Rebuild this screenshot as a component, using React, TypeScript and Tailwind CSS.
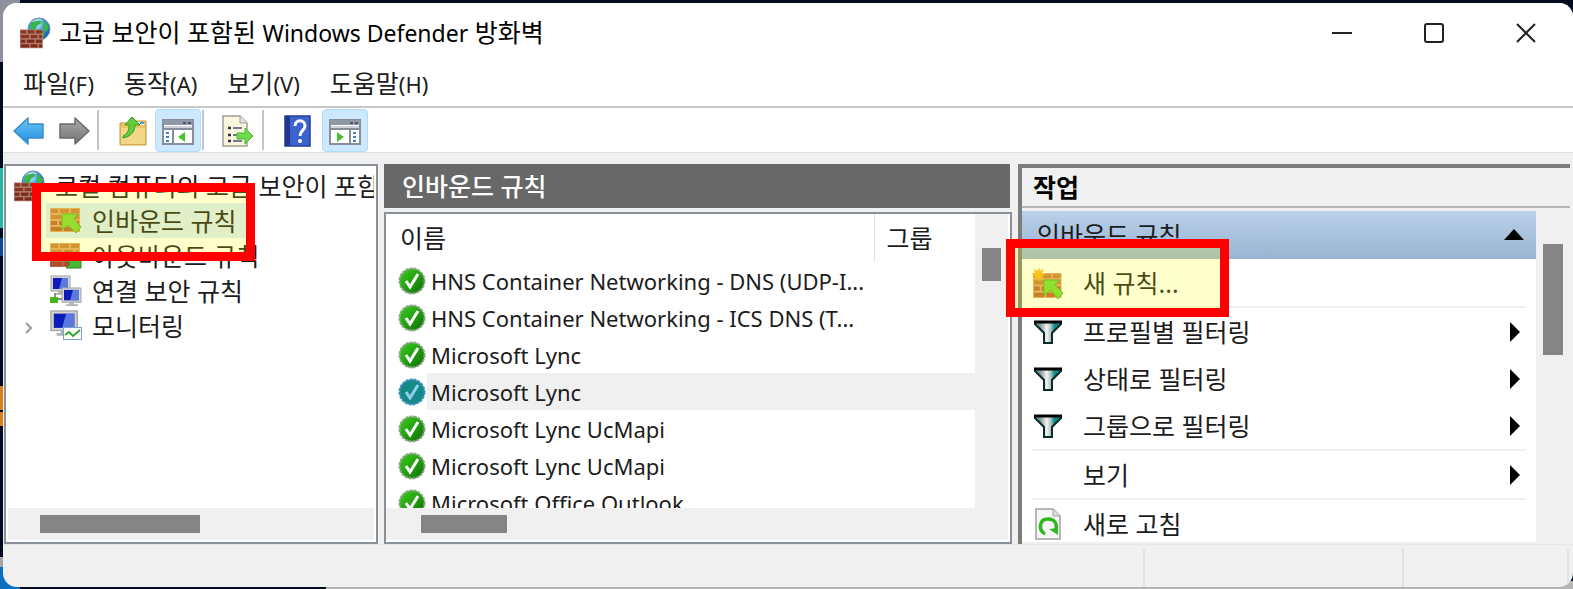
import React from 'react';

const BrickWall = ({ warm }: { warm?: boolean }) => (
  <g>
    <rect width="30" height="24" fill={warm ? '#dba070' : '#b07a6a'} />
    <g fill={warm ? '#cc7a3c' : '#8b3422'}>
      <rect x="1" y="1" width="7" height="4" />
      <rect x="10" y="1" width="9" height="4" />
      <rect x="21" y="1" width="8" height="4" />
      <rect x="1" y="7" width="11" height="4" />
      <rect x="14" y="7" width="9" height="4" />
      <rect x="25" y="7" width="4" height="4" />
    </g>
    <g fill={warm ? '#b8602c' : '#7c2a1b'}>
      <rect x="1" y="13" width="6" height="4" />
      <rect x="9" y="13" width="10" height="4" />
      <rect x="21" y="13" width="8" height="4" />
      <rect x="1" y="19" width="11" height="4" />
      <rect x="14" y="19" width="9" height="4" />
      <rect x="25" y="19" width="4" height="4" />
    </g>
  </g>
);

const FirewallIcon = () => (
  <svg viewBox="0 0 31 32" className="h-8 w-[31px] shrink-0" aria-hidden="true">
    <defs>
      <radialGradient id="globe" cx="0.4" cy="0.3" r="0.8">
        <stop offset="0" stopColor="#c8f0ff" />
        <stop offset="0.4" stopColor="#3fa0e8" />
        <stop offset="1" stopColor="#123c9c" />
      </radialGradient>
    </defs>
    <circle cx="19" cy="12" r="11" fill="url(#globe)" stroke="#6f93b8" />
    <path d="M10 8c3-5 7-6 10-5l1 3-4 3-2 4-4 1zM23 4c3 1 5 4 6 7l-3 4-4-3 1-3zM20 15l5 1-2 5-4-1z" fill="#39b54a" />
    <path d="M12 5c3-3 8-4 12-1-4-1-8 0-12 1z" fill="#fff" opacity="0.7" />
    <g transform="translate(0 12.5) scale(0.76 0.78)">
      <BrickWall />
    </g>
  </svg>
);

const InboundIcon = () => (
  <svg viewBox="0 0 32 26" className="h-[26px] w-8 shrink-0" aria-hidden="true">
    <BrickWall warm />
    <path d="M12 6h16l-4 5 7 8-5 6-8-8-6 5z" fill="#7ed53c" stroke="#57b025" strokeLinejoin="round" />
  </svg>
);

const OutboundIcon = () => (
  <svg viewBox="0 0 32 26" className="h-[26px] w-8 shrink-0" aria-hidden="true">
    <BrickWall warm />
    <rect y="12" width="30" height="12" fill="#a8402c" opacity="0.6" />
    <path d="M31 25H16l4-4-7-8 4-5 9 9 5-4z" fill="#49b836" stroke="#2f8a22" strokeLinejoin="round" />
  </svg>
);

const NewRuleIcon = () => (
  <svg viewBox="0 0 32 32" className="size-8 shrink-0" aria-hidden="true">
    <g transform="translate(1 6) scale(0.95 1.04)">
      <BrickWall warm />
    </g>
    <path d="M12 13h15l-4 5 8 8-5 6-7-9-7 5z" fill="#74d83a" stroke="#57b025" strokeLinejoin="round" />
    <path d="M7 0l1 4 4-2-2 4 4 1-4 2 2 4-4-2-1 4-1-4-4 2 1-4-4-2 4-1-1-4 4 2z" fill="#f8b421" />
  </svg>
);

const Monitor = () => (
  <g>
    <rect width="19" height="15" fill="#d6d6d0" stroke="#a2a2a0" />
    <rect x="2" y="2" width="15" height="11" fill="#0b1cb8" />
    <path d="M11 2h6v11H8z" fill="#7da0f2" opacity="0.7" />
    <path d="M7 15h5v2h4v2H4v-2h3z" fill="#b4b4b4" />
  </g>
);

const ConnectionIcon = () => (
  <svg viewBox="0 0 32 32" className="size-8 shrink-0" aria-hidden="true">
    <g transform="translate(1 1)">
      <Monitor />
    </g>
    <g transform="translate(12 13) scale(1 0.95)">
      <Monitor />
    </g>
    <path d="M5 18v6h7" fill="none" stroke="#8c8c8c" strokeWidth="2" />
    <rect y="22" width="8" height="6" fill="#43b71c" />
  </svg>
);

const MonitoringIcon = () => (
  <svg viewBox="0 0 32 32" className="size-8 shrink-0" aria-hidden="true">
    <g transform="translate(1 1) scale(1.38 1.3)">
      <Monitor />
    </g>
    <rect x="13.5" y="17.5" width="18" height="12" fill="#fff" stroke="#7aa0cf" />
    <path d="M15 25l4-3 4 4 7-6" fill="none" stroke="#35a52c" strokeWidth="2" />
  </svg>
);

const Arrow = ({ forward }: { forward?: boolean }) => (
  <svg viewBox="0 0 32 30" className="h-[30px] w-8" aria-hidden="true">
    <defs>
      <linearGradient id="back" x1="0" y1="0" x2="0" y2="1">
        <stop offset="0" stopColor="#6cc7f8" />
        <stop offset="1" stopColor="#1f8be0" />
      </linearGradient>
      <linearGradient id="fwd" x1="0" y1="0" x2="0" y2="1">
        <stop offset="0" stopColor="#a8a8a8" />
        <stop offset="1" stopColor="#747474" />
      </linearGradient>
    </defs>
    <path
      d={forward ? 'M31 15L17 2v6H2v14h15v6z' : 'M1 15L15 2v6h15v14H15v6z'}
      fill={forward ? 'url(#fwd)' : 'url(#back)'}
      stroke={forward ? '#6a6a6a' : '#3c8cc8'}
      strokeWidth="1.5"
      strokeLinejoin="round"
    />
  </svg>
);

const FolderUpIcon = () => (
  <svg viewBox="0 0 28 30" className="h-[30px] w-7" aria-hidden="true">
    <path d="M1 7h10l3-2h13v24H1z" fill="#e8c566" stroke="#c49a3a" />
    <path d="M17 6h8v3h-8z" fill="#fff" />
    <path d="M21 6h4v2h-4z" fill="#4b9be0" />
    <path d="M2 12h24v16H2z" fill="#f3d88a" />
    <path d="M4 20c5-2 6-7 6-11H6l7-8 8 8h-5c0 7-5 12-12 13z" fill="#62cc3b" stroke="#3a9c22" strokeLinejoin="round" />
  </svg>
);

const PaneIcon = ({ right }: { right?: boolean }) => (
  <svg viewBox="0 0 32 26" className="mt-1 h-[26px] w-8" aria-hidden="true">
    <rect x="1" y="1" width="30" height="24" fill="#fff" stroke="#868e9a" strokeWidth="2" />
    <rect x="1" y="1" width="30" height="5" fill="#8f98a6" />
    <path d="M2 8h28" stroke="#cfd4dc" strokeWidth="2" />
    <path d="M2 10h28" stroke="#868e9a" strokeWidth="2" />
    <path d="M21 4h3M26 4h3" stroke="#4e5868" strokeWidth="2" />
    <path d={right ? 'M21 10v15' : 'M11 10v15'} stroke="#868e9a" strokeWidth="2" />
    <path
      d={right ? 'M24 14h4M24 18h4M24 22h4' : 'M4 14h4M4 18h4M4 22h4'}
      stroke="#3d85c8"
      strokeWidth="2"
      strokeDasharray="3 1"
    />
    <path d={right ? 'M8 13v10l7-5z' : 'M23 13v10l-7-5z'} fill="#4cc02c" />
  </svg>
);

const ExportIcon = () => (
  <svg viewBox="0 0 32 32" className="size-8" aria-hidden="true">
    <path d="M1 1h17l7 7v23H1z" fill="#fbf7df" stroke="#a09f95" strokeWidth="1.5" />
    <path d="M18 1v7h7" fill="#e5e5e5" stroke="#a09f95" />
    <path d="M6 13h3M6 20h3M6 26h3" stroke="#333" strokeWidth="2.5" />
    <path d="M11 13h9M11 20h5M11 26h9" stroke="#7d7793" strokeWidth="2" />
    <path d="M15 18h8v-5l8 8-8 8v-5h-8z" fill="#6ddb4c" stroke="#4cb52e" strokeLinejoin="round" />
  </svg>
);

const HelpIcon = () => (
  <svg viewBox="0 0 27 32" className="h-8 w-[27px]" aria-hidden="true">
    <rect x="1" y="1" width="25" height="30" fill="#3c62d0" stroke="#233f98" strokeWidth="1.5" />
    <path d="M1 1h5v30H1z" fill="#20378c" />
    <path d="M11 11c0-7 10-7 10 0 0 4-5 4.5-5 10" fill="none" stroke="#fff" strokeWidth="3" />
    <circle cx="16" cy="26" r="2" fill="#fff" />
  </svg>
);

const CheckIcon = ({ selected }: { selected?: boolean }) => (
  <svg viewBox="0 0 28 28" className="size-7 shrink-0" aria-hidden="true">
    <defs>
      <linearGradient id="ok" x1="0" y1="0" x2="1" y2="1">
        <stop offset="0" stopColor="#3dd020" />
        <stop offset="0.5" stopColor="#22a010" />
        <stop offset="1" stopColor="#0e6a06" />
      </linearGradient>
    </defs>
    <circle
      cx="14"
      cy="14"
      r="12.5"
      fill={selected ? '#158a84' : 'url(#ok)'}
      stroke={selected ? '#3f8fc6' : '#8aa585'}
      strokeWidth="2"
      strokeDasharray="3 1"
    />
    <path d="M8 14l4 6 8-13" fill="none" stroke={selected ? '#8fd0f0' : '#fff'} strokeWidth="3" />
  </svg>
);

const FilterIcon = () => (
  <svg viewBox="0 0 28 24" className="h-6 w-7" aria-hidden="true">
    <defs>
      <linearGradient id="funnel">
        <stop offset="0.2" stopColor="#7f9a9a" />
        <stop offset="0.45" stopColor="#f2f2f2" />
        <stop offset="0.6" stopColor="#b5c4c4" />
        <stop offset="0.75" stopColor="#0e8b8b" />
      </linearGradient>
    </defs>
    <path d="M1 2h26v2l-9 9v10h-8V13L1 4z" fill="url(#funnel)" stroke="#0b2b2b" strokeWidth="2" />
    <path d="M0 2h28" stroke="#000" strokeWidth="3" />
  </svg>
);

const RefreshIcon = () => (
  <svg viewBox="0 0 26 32" className="h-8 w-[26px]" aria-hidden="true">
    <path d="M1 1h17l7 7v23H1z" fill="#f7f7f7" stroke="#a0a0a0" strokeWidth="1.5" />
    <path d="M18 1v7h7" fill="#ddd" stroke="#a0a0a0" />
    <path d="M10 26c-7-4-6-15 3-15 8 0 10 7 7 12" fill="none" stroke="#2fb81c" strokeWidth="3.5" />
    <path d="M14 21l9-1v7z" fill="#2fb81c" />
  </svg>
);

const menus = [
  { name: '파일', hotkey: '(F)' },
  { name: '동작', hotkey: '(A)' },
  { name: '보기', hotkey: '(V)' },
  { name: '도움말', hotkey: '(H)' },
];

const rules = [
  { name: 'HNS Container Networking - DNS (UDP-I...' },
  { name: 'HNS Container Networking - ICS DNS (T...' },
  { name: 'Microsoft Lync' },
  { name: 'Microsoft Lync', selected: true },
  { name: 'Microsoft Lync UcMapi' },
  { name: 'Microsoft Lync UcMapi' },
  { name: 'Microsoft Office Outlook' },
];

const actions = [
  { name: '새 규칙...', icon: <NewRuleIcon />, divider: true },
  { name: '프로필별 필터링', icon: <FilterIcon />, submenu: true },
  { name: '상태로 필터링', icon: <FilterIcon />, submenu: true },
  { name: '그룹으로 필터링', icon: <FilterIcon />, submenu: true, divider: true },
  { name: '보기', icon: null, submenu: true, divider: true },
  { name: '새로 고침', icon: <RefreshIcon /> },
];

const ToolButton = ({ label, active, children }: { label: string; active?: boolean; children: React.ReactNode }) => (
  <button
    aria-label={label}
    className={
      active
        ? 'flex h-[43px] w-[46px] items-center justify-center rounded-sm border border-[#b0dcff] bg-[#cce8ff]'
        : 'flex h-[43px] w-[45px] items-center justify-center pt-0.5'
    }
  >
    {children}
  </button>
);

const Separator = ({ className }: { className: string }) => <div className={`h-10 w-0.5 bg-[#c4c4c4] ${className}`} />;

const Highlight = ({ className }: { className: string }) => (
  <div className={`pointer-events-none absolute z-10 border-[9px] border-[#ff0000] bg-[#ffff00]/20 ${className}`} />
);

const TreeItem = ({ icon, label, expandable }: { icon: React.ReactNode; label: string; expandable?: boolean }) => (
  <li className="flex h-[35px] items-center pl-[15px]">
    <span className="w-[27px]">
      {expandable && (
        <svg viewBox="0 0 12 14" className="mt-1 h-3.5 w-3" aria-hidden="true">
          <path d="M3 2l5 5-5 5" fill="none" stroke="#999" strokeWidth="2" />
        </svg>
      )}
    </span>
    {icon}
    <a href="#" className="ml-[10px]">{label}</a>
  </li>
);

const App: React.FC = () => {
  return (
    <div className="relative flex h-screen flex-col overflow-hidden bg-[#040c22] pt-[3px] pb-0.5 pl-[3px] font-['Noto_Sans','Noto_Sans_CJK_KR',sans-serif] text-[25px] leading-8 text-[#1c1c1c]">
      {/* Desktop showing past the window edge */}
      <div className="absolute inset-y-0 left-0 flex w-5 flex-col">
        <div className="h-[62px] bg-[#8c919c]" />
        <div className="mt-[106px] h-[60px] bg-[#27b5a0]" />
        <div className="mt-[10px] h-[18px] bg-[#0d4a92]" />
        <div className="mt-[130px] h-6 bg-[#d9821b]" />
        <div className="mt-0.5 h-[14px] bg-[#d9821b]" />
        <div className="mt-auto h-8 border-t-[10px] border-[#a5a5a5] bg-[#0c6fc0]" />
      </div>
      <div className="absolute inset-x-0 bottom-0 ml-[326px] h-2 bg-[#b4b4b4]" />

      <div className="relative flex min-h-0 flex-1 flex-col overflow-hidden rounded-[14px] bg-[#f0f0f0]">
        {/* Title bar */}
        <header className="flex h-[60px] shrink-0 items-center bg-white pr-px pl-[17px]">
          <FirewallIcon />
          <h1 className="ml-2 flex-1 pb-0.5 text-black">
            고급 보안이 포함된 <span className="text-[23px]">Windows Defender</span> 방화벽
          </h1>
          <button aria-label="최소화" className="flex w-[92px] justify-center">
            <svg viewBox="0 0 20 20" className="size-5" stroke="#222" strokeWidth="2"><path d="M0 10h20" /></svg>
          </button>
          <button aria-label="최대화" className="flex w-[92px] justify-center">
            <svg viewBox="0 0 20 20" className="size-5" fill="none" stroke="#222" strokeWidth="2">
              <rect x="1" y="1" width="18" height="18" rx="2" />
            </svg>
          </button>
          <button aria-label="닫기" className="flex w-[92px] justify-center">
            <svg viewBox="0 0 20 20" className="size-5" stroke="#222" strokeWidth="2"><path d="M1 1l18 18M19 1L1 19" /></svg>
          </button>
        </header>

        <nav className="flex h-[45px] shrink-0 items-center gap-[30px] border-b-2 border-[#c8c8c8] bg-white pl-5">
          {menus.map((menu) => (
            <button key={menu.name} className="flex items-baseline pb-0.5">
              {menu.name}
              <span className="text-[22px]">{menu.hotkey}</span>
            </button>
          ))}
        </nav>

        <div className="flex h-[45px] shrink-0 items-center border-b border-[#e0e0e0] bg-white pl-[3px]">
          <ToolButton label="뒤로"><Arrow /></ToolButton>
          <ToolButton label="앞으로"><Arrow forward /></ToolButton>
          <Separator className="mr-[11px] ml-px" />
          <ToolButton label="위로"><FolderUpIcon /></ToolButton>
          <ToolButton label="콘솔 트리" active><PaneIcon /></ToolButton>
          <Separator className="mr-[11px] ml-px" />
          <ToolButton label="목록 내보내기"><ExportIcon /></ToolButton>
          <Separator className="mr-[11px] ml-0.5" />
          <ToolButton label="도움말"><HelpIcon /></ToolButton>
          <div className="ml-0.5">
            <ToolButton label="작업 창" active><PaneIcon right /></ToolButton>
          </div>
        </div>

        <main className="flex min-h-0 flex-1 gap-1.5 pt-[11px] pr-[3px] pl-px">
          {/* Console tree */}
          <section className="relative flex w-[374px] shrink-0 flex-col border-2 border-[#8a9099] bg-white p-0.5">
            <ul className="min-h-0 flex-1 overflow-hidden whitespace-nowrap">
              <li>
                <div className="flex h-[35px] items-center pl-1.5">
                  <FirewallIcon />
                  <a href="#" className="ml-[10px]">로컬 컴퓨터의 고급 보안이 포함된</a>
                </div>
                <ul>
                  <li className="flex h-[35px] items-center pl-[38px]">
                    <div className="flex h-[35px] w-[202px] items-center bg-[#d9ebf9] pl-1">
                      <InboundIcon />
                      <a href="#" className="ml-[10px]">인바운드 규칙</a>
                    </div>
                  </li>
                  <TreeItem icon={<OutboundIcon />} label="아웃바운드 규칙" />
                  <TreeItem icon={<ConnectionIcon />} label="연결 보안 규칙" />
                  <TreeItem icon={<MonitoringIcon />} label="모니터링" expandable />
                </ul>
              </li>
            </ul>
            <div className="h-8 shrink-0 bg-[#f0f0f0] px-8 py-[7px]">
              <div className="h-[18px] w-40 bg-[#858585]" />
            </div>
            <Highlight className="top-[17px] left-[26px] h-[78px] w-[223px]" />
          </section>

          {/* Rule list */}
          <section className="flex min-w-0 flex-1 flex-col">
            <h2 className="mr-0.5 mb-1 flex h-11 shrink-0 items-center bg-[#686868] pl-[18px] font-medium text-white">인바운드 규칙</h2>
            <div className="flex min-h-0 flex-1 flex-col border-2 border-[#8a9099] bg-white pr-0.5 pb-0.5">
              <div className="flex min-h-0 flex-1">
                <div className="min-w-0 flex-1 overflow-hidden">
                  <table className="w-full table-fixed border-collapse whitespace-nowrap">
                    <thead>
                      <tr className="h-12 text-left">
                        <th className="border-r border-[#e2e2e2] pl-[14px] font-normal">이름</th>
                        <th className="w-[101px] pl-3 font-normal">그룹</th>
                      </tr>
                    </thead>
                    <tbody className="text-[22px] leading-7">
                      {rules.map((rule, i) => (
                        <tr key={i} className="h-[37px]">
                          <td className="p-0">
                            <div className="flex h-[37px] items-center pl-3">
                              <CheckIcon selected={rule.selected} />
                              <span
                                className={
                                  rule.selected
                                    ? 'ml-px flex flex-1 items-center self-stretch bg-[#f0f0f0] pl-1'
                                    : 'ml-px flex flex-1 items-center self-stretch pl-1'
                                }
                              >
                                {rule.name}
                              </span>
                            </div>
                          </td>
                          <td className={rule.selected ? 'bg-[#f0f0f0]' : ''} />
                        </tr>
                      ))}
                    </tbody>
                  </table>
                </div>
                <div className="w-[33px] shrink-0 bg-[#f0f0f0] px-[7px] pt-[34px]">
                  <div className="h-[33px] bg-[#858585]" />
                </div>
              </div>
              <div className="h-8 shrink-0 bg-[#f0f0f0] px-[35px] py-[7px]">
                <div className="h-[18px] w-[86px] bg-[#858585]" />
              </div>
            </div>
          </section>

          {/* Actions */}
          <section className="relative flex w-[552px] shrink-0 flex-col border-t-4 border-l-4 border-[#7c7c7c] pb-0.5">
            <h2 className="flex h-[38px] shrink-0 items-center pl-[11px] font-bold text-black">작업</h2>
            <div className="h-[5px] shrink-0 border-t-2 border-[#b5b5b5]" />
            <div className="flex min-h-0 flex-1">
              <div className="min-w-0 flex-1 overflow-hidden bg-white">
                <div className="flex h-12 items-center justify-between bg-linear-to-b from-[#b9d1ea] to-[#99b4d1] pr-3 pl-[15px]">
                  <h3>인바운드 규칙</h3>
                  <svg viewBox="0 0 20 12" className="h-3 w-5" aria-hidden="true"><path d="M10 0l10 11H0z" /></svg>
                </div>
                <ul>
                  {actions.map((action) => (
                    <li
                      key={action.name}
                      className={action.divider ? 'mx-[10px] border-b-2 border-[#f0f0f0]' : 'mx-[10px]'}
                    >
                      <button className="flex h-[47px] w-full items-center pr-1.5 text-left">
                        <span className="flex w-8 justify-center">{action.icon}</span>
                        <span className="ml-[19px] flex-1">{action.name}</span>
                        {action.submenu && (
                          <svg viewBox="0 0 10 20" className="h-5 w-[10px]" aria-hidden="true"><path d="M0 0l10 10L0 20z" /></svg>
                        )}
                      </button>
                    </li>
                  ))}
                </ul>
              </div>
              <div className="w-[34px] shrink-0 px-[7px] pt-[33px]">
                <div className="h-[111px] bg-[#858585]" />
              </div>
            </div>
            <Highlight className="top-[71px] -left-4 h-[78px] w-[223px]" />
          </section>
        </main>

        <footer className="flex h-[43px] shrink-0 justify-end border-t border-[#e6e6e6] pt-1 pr-1">
          <div className="w-[259px] border-l-2 border-[#e2e2e2]" />
          <div className="w-[167px] border-x-2 border-[#e2e2e2]" />
        </footer>
      </div>
    </div>
  );
};

export default App;
